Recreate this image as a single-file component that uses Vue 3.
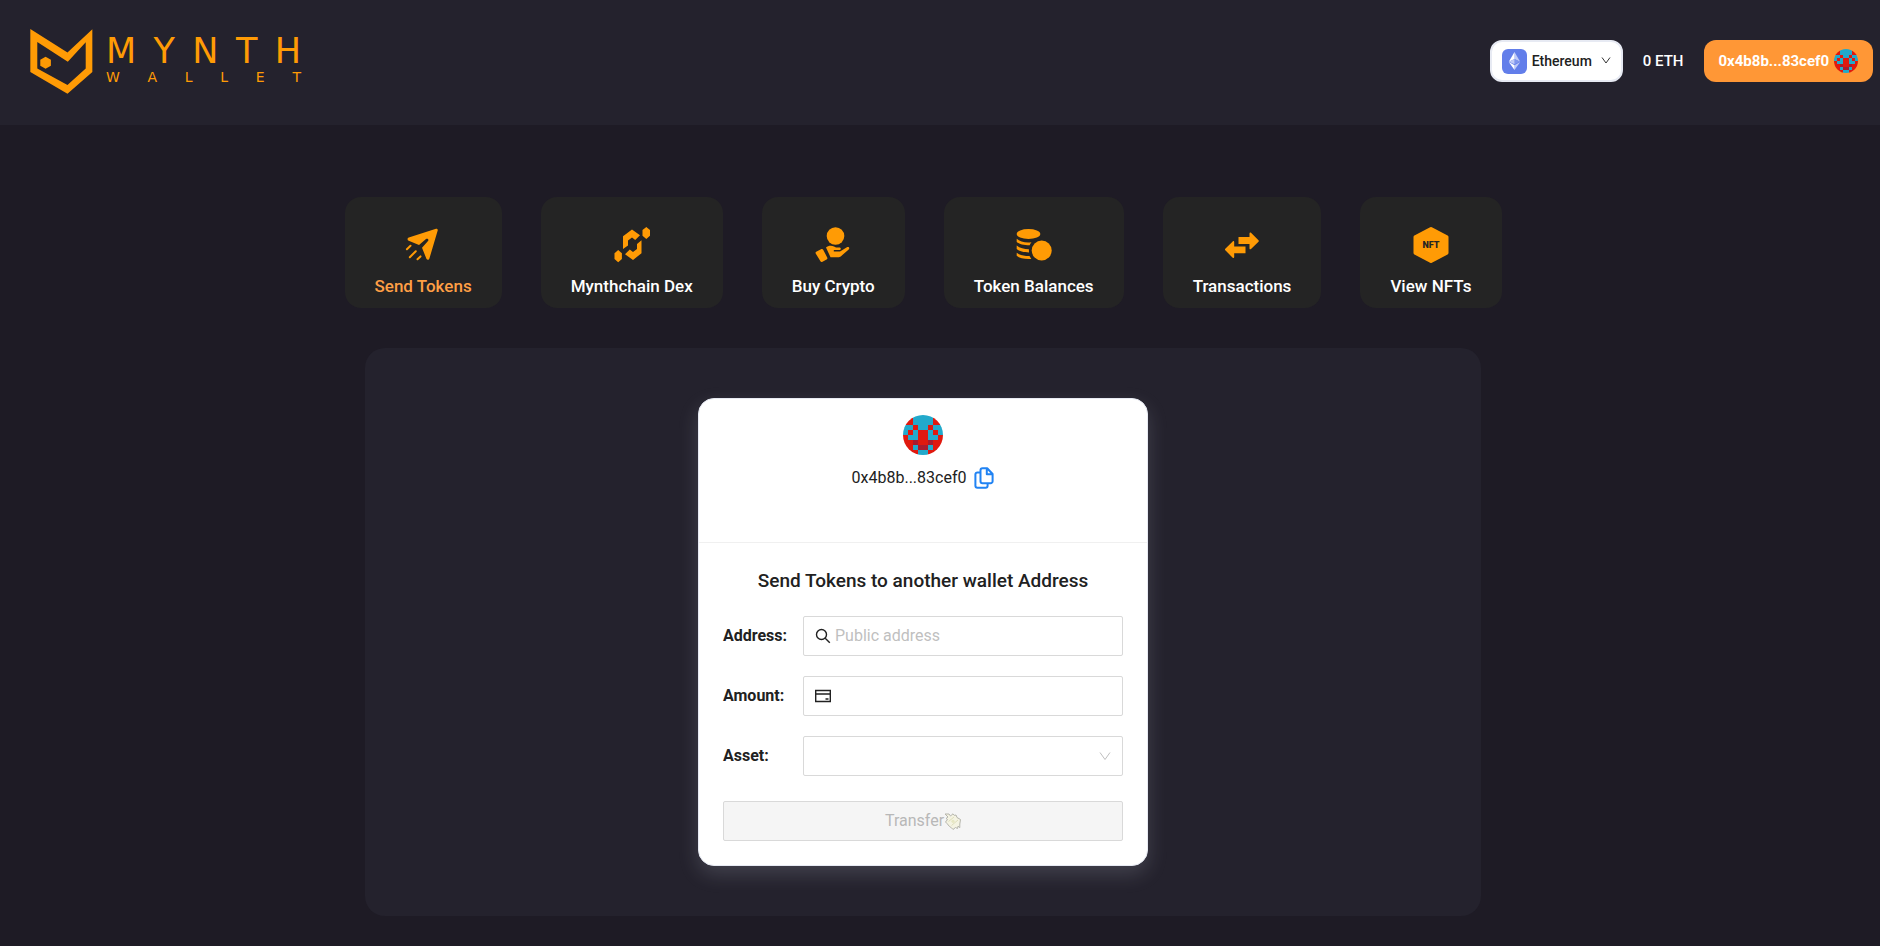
<script setup>
import { ref } from 'vue'

const address = '0x4b8b...83cef0'
const recipient = ref('')
const amount = ref('')
const asset = ref('')

const tabs = [
  { id: 'send', label: 'Send Tokens', active: true },
  { id: 'dex', label: 'Mynthchain Dex' },
  { id: 'buy', label: 'Buy Crypto' },
  { id: 'balances', label: 'Token Balances' },
  { id: 'transactions', label: 'Transactions' },
  { id: 'nfts', label: 'View NFTs' },
]

/* b = blue, r = red, d = dark red */
const blockie = [
  'rrbbbbrr',
  'rrbbbbrr',
  'bbrbbrbb',
  'brbrrbrb',
  'rbbrrbbr',
  'rrdrrdrr',
  'rrbddbrr',
  'rrrbbrrr',
]
const palette = { b: '#22a9cb', r: '#e0190f', d: '#a81c30' }
const cells = blockie.flatMap((row, y) =>
  [...row].map((c, x) => ({ x, y, fill: palette[c] })),
)
</script>

<template>
  <div class="page">
    <header class="topbar">
      <a class="logo" href="#" aria-label="Mynth Wallet">
        <svg class="logo-mark" viewBox="90 87 188 196" aria-hidden="true">
          <path
            fill-rule="evenodd"
            d="M90 87 202 158 277 88V217L202 282 90 217ZM111 126V206L202 256 257 206V127L203 186Z"
          />
          <path d="M136 171 152 180V198L136 207 120 198V180Z" />
        </svg>
        <span class="logo-words">
          <span class="logo-line big"><span v-for="(c, i) in 'MYNTH'" :key="i">{{ c }}</span></span>
          <span class="logo-line small"><span v-for="(c, i) in 'WALLET'" :key="i">{{ c }}</span></span>
        </span>
      </a>

      <div class="account-area">
        <button class="chain" type="button">
          <svg class="eth" viewBox="0 0 25 25" aria-hidden="true">
            <rect width="25" height="25" rx="6" fill="#627eea" />
            <path d="M12.500 3v7.100l5.700 2.600z" fill="#c0cbf7" />
            <path d="M12.500 3 6.800 12.700l5.700-2.600z" fill="#fff" />
            <path d="M12.500 16.200v4.800l5.700-7.900z" fill="#c0cbf7" />
            <path d="M12.500 21v-4.800l-5.700-3.100z" fill="#fff" />
            <path d="m12.500 15.200 5.700-2.500-5.700-2.600z" fill="#8197ee" />
            <path d="m6.800 12.700 5.700 2.500v-5.100z" fill="#c0cbf7" />
          </svg>
          <span>Ethereum</span>
          <svg class="chevron" viewBox="0 0 10 10" aria-hidden="true">
            <path d="M1 1.500 5 7 9 1.500" />
          </svg>
        </button>
        <span class="balance">0 ETH</span>
        <button class="account" type="button">
          <span>{{ address }}</span>
          <svg class="avatar small-avatar" viewBox="0 0 8 8" shape-rendering="crispEdges" aria-hidden="true">
            <rect v-for="(c, i) in cells" :key="i" :x="c.x" :y="c.y" width="1" height="1" :fill="c.fill" />
          </svg>
        </button>
      </div>
    </header>

    <main class="content">
      <nav class="tabs">
        <a v-for="t in tabs" :key="t.id" href="#" class="tab" :class="{ active: t.active }">
          <svg class="tab-icon" viewBox="0 0 36 36" aria-hidden="true">
            <g v-if="t.id === 'send'">
              <path
                d="M31 1.700c1.300-.3 2 .6 1.700 1.900L24.400 31.500c-.5 1.600-2.300 1.700-3 .2L17 20.700l6-6.700c1.300-1.500-.6-3.200-2-1.900l-7 5.900-10.300-4.200c-1.600-.7-1.500-2.700.1-3.200z"
              />
              <path class="line" d="m1.900 22.200 3.600-3.400M4.800 30.200l6-6M12.500 32.200l3-2.800" />
            </g>
            <g v-else-if="t.id === 'dex'">
              <path d="m18 2.500 8 5.800-4.800 4.700-3.200-2.500-4 3v5l-5 3.500V9.300z" />
              <path d="m19 33-8-5.800 4.800-4.700 3.200 2.500 4-3v-5l4.500-3.800v13z" />
              <path d="m32.300 0 3.700 3v5.800l-3.700 3.200-3.800-3.200V3z" />
              <path d="m4.200 23 3.700 3.200V32l-3.700 3.200L.500 32v-5.800z" />
            </g>
            <g v-else-if="t.id === 'buy'">
              <circle cx="20.500" cy="9" r="8.800" />
              <path
                d="M11 20.500c2-2 5.500-2.300 8-1l2 1h3.500c1.600 0 1.800 2.600 0 2.600h-5.700v1.400H25l6.500-4c1.800-1.400 3.800.3 2.200 2L26 29.200c-1 .8-1.800 1-3 1h-7.500z"
              />
              <path d="M1.200 24.800 6 22.200c1-.5 1.700-.3 2.200.6l4 7.600c.5 1 .2 1.500-.6 2L7.500 34.700c-1 .5-1.700.3-2.200-.6L.700 26.500c-.4-.8-.2-1.300.5-1.700z" />
            </g>
            <g v-else-if="t.id === 'balances'">
              <ellipse cx="12.500" cy="7" rx="11.800" ry="5" />
              <path d="M.700 11.800c3 3 8.800 4.200 14.800 3.500-.9 1-1.500 2-1.800 3C8 18.300 3 17 .700 15z" />
              <path d="M.700 18.500c3 2.600 7.500 3.600 12.200 3.700l.1 3.200C8 25.400 3 24.300.700 22z" />
              <path d="M.700 25.700c3 2.500 8 3.400 12.800 3.300l1.800 3C9 32.300 3.400 31.500.700 28.800z" />
              <circle cx="25.700" cy="23.500" r="10" />
            </g>
            <g v-else-if="t.id === 'transactions'">
              <path d="M14.500 10h11V6.400c0-1 .8-1.300 1.500-.6l7.500 7.400c.5.500.5 1 0 1.500L27 22c-.7.700-1.500.3-1.500-.6V17h-11z" />
              <path d="M21.500 26.200v-6.700H10.200V15c0-1-.8-1.300-1.500-.6L1.300 21.800c-.5.500-.5 1 0 1.500l7.400 7.400c.7.700 1.500.3 1.500-.6v-3.900z" />
            </g>
            <g v-else>
              <path d="M18.900.3 34.600 8.500q.9.500.9 1.400v16.200q0 .9-.9 1.400L18.900 35.700q-.9.400-1.800 0L1.400 27.500q-.9-.5-.9-1.400V9.900q0-.9.900-1.400L17.100.3q.9-.4 1.800 0z" />
              <text x="18" y="21">NFT</text>
            </g>
          </svg>
          <span>{{ t.label }}</span>
        </a>
      </nav>

      <section class="panel">
        <div class="card">
          <div class="card-head">
            <svg class="avatar" viewBox="0 0 8 8" shape-rendering="crispEdges" aria-hidden="true">
              <rect v-for="(c, i) in cells" :key="i" :x="c.x" :y="c.y" width="1" height="1" :fill="c.fill" />
            </svg>
            <div class="address">
              <span>{{ address }}</span>
              <button class="copy" type="button" aria-label="Copy address">
                <svg viewBox="0 0 20 22" aria-hidden="true">
                  <path d="M8.500 1.200h4.700L18.600 7v7.200a2 2 0 0 1-2 2H8.500a2 2 0 0 1-2-2v-11a2 2 0 0 1 2-2zM12.800 1.500V7.300h5.500" />
                  <path d="M6.500 5.400H3.400a2 2 0 0 0-2 2v11.400a2 2 0 0 0 2 2h8.200a2 2 0 0 0 2-2v-2.600" />
                </svg>
              </button>
            </div>
          </div>
          <form class="form" @submit.prevent>
            <h3>Send Tokens to another wallet Address</h3>
            <div class="row">
              <label for="recipient">Address:</label>
              <div class="field">
                <svg viewBox="0 0 16 16" aria-hidden="true">
                  <circle cx="6.500" cy="6.500" r="5" />
                  <path d="m10.200 10.200 4.600 4.600" />
                </svg>
                <input id="recipient" v-model="recipient" type="text" placeholder="Public address" />
              </div>
            </div>
            <div class="row">
              <label for="amount">Amount:</label>
              <div class="field">
                <svg viewBox="0 0 16 16" aria-hidden="true">
                  <path d="M.700 2.500h14.600v11H.700zM.700 6h14.600M10.500 11h3" />
                </svg>
                <input id="amount" v-model="amount" type="text" />
              </div>
            </div>
            <div class="row">
              <label for="asset">Asset:</label>
              <div class="field select-field">
                <select id="asset" v-model="asset"></select>
                <svg class="chevron pale" viewBox="0 0 12 12" aria-hidden="true">
                  <path d="M1 2.500 6 9.500 11 2.500" />
                </svg>
              </div>
            </div>
            <button class="transfer" type="submit" disabled>
              <span>Transfer</span>
              <svg viewBox="0 0 17 17" aria-hidden="true">
                <path
                  d="M1 1h4l1.500 2L9 .800l1.300 1.600 1.700-.4 1 2.500 3.500 2-.7 4.500v3.700l-1.800-1.500-.5 2.300-2-1L9 16.500 7.500 14.800 5.500 13.500 3 10.500 1.500 9 3.500 6.500 2 5.500 4 4z"
                  fill="#f4f3e2" stroke="#b5b5ac" stroke-linejoin="round"
                />
                <path d="M4.500 8.500 10 4M7.500 12.500 14 7" stroke="#dedeba" fill="none" />
                <circle cx="9" cy="8.300" r="1.600" fill="#e6e6c2" />
              </svg>
            </button>
          </form>
        </div>
      </section>
    </main>
  </div>
</template>

<style>
body {
  background: #1e1b25;
}
</style>

<style scoped>
.page,
.page * {
  box-sizing: border-box;
}
.page {
  min-height: 100vh;
  background: #1e1b25;
  color: #212121;
  font-family: Roboto, "Liberation Sans", sans-serif;
  font-size: 16px;
  font-weight: 500;
  line-height: 24px;
}
button,
input,
select {
  font: inherit;
}
a {
  text-decoration: none;
}
.topbar {
  display: flex;
  align-items: center;
  justify-content: space-between;
  height: 125px;
  padding: 0 7px 3px 30px;
  background: #24222d;
}
.logo {
  display: flex;
  align-items: center;
  gap: 13px;
  color: #ff9b05;
}
.logo-mark {
  width: 63px;
  height: 65px;
  fill: currentColor;
}
.logo-words {
  display: flex;
  flex-direction: column;
  gap: 6px;
  width: 195px;
  font-family: "DejaVu Sans", sans-serif;
  font-weight: 400;
}
.logo-line {
  display: flex;
  justify-content: space-between;
}
.big {
  font-size: 35px;
  line-height: 26px;
}
.small {
  font-size: 14px;
  line-height: 14px;
}
.account-area {
  display: flex;
  align-items: center;
  gap: 20px;
  font-size: 15px;
}
.chain,
.account {
  display: flex;
  align-items: center;
  height: 42px;
  border-radius: 12px;
}
.chain {
  gap: 5px;
  padding: 0 10px;
  border: 2px solid #e7eaf3;
  background: #fff;
  color: #212121;
  font-size: 14px;
}
.eth {
  width: 25px;
  height: 25px;
}
.chevron {
  width: 10px;
  height: 10px;
  margin-left: 4px;
  fill: none;
  stroke: #333;
}
.balance {
  color: #fff;
}
.account {
  gap: 5px;
  padding: 0 15px;
  border: 0;
  background: #ff9736;
  color: #fff;
  font-weight: 700;
}
.avatar {
  width: 40px;
  height: 40px;
  border-radius: 50%;
}
.small-avatar {
  width: 24px;
  height: 24px;
}
.content {
  display: flex;
  flex-direction: column;
  align-items: center;
  gap: 40px;
  padding: 72px 34px 30px 0;
}
.tabs {
  display: flex;
  gap: 39px;
}
.tab {
  display: flex;
  flex-direction: column;
  align-items: center;
  gap: 11px;
  padding: 30px 30px 10px;
  border-radius: 16px;
  background: #242424;
  color: #fff;
  font-size: 17px;
}
.tab.active {
  color: #ff9f45;
}
.tab-icon {
  width: 36px;
  height: 36px;
  fill: #ff9b05;
}
.tab-icon .line {
  stroke: #ff9b05;
  stroke-width: 2;
  stroke-linecap: round;
}
.tab-icon text {
  fill: #242424;
  font-size: 9px;
  font-weight: 900;
  text-anchor: middle;
}
.panel {
  display: flex;
  justify-content: center;
  width: 100%;
  max-width: 1116px;
  padding: 50px;
  border-radius: 20px;
  background: #24222d;
}
.card {
  width: 450px;
  border: 1px solid #e7eaf3;
  border-radius: 16px;
  background: #fff;
  box-shadow: 0 8px 20px rgba(189, 197, 209, 0.2);
}
.card-head {
  display: flex;
  flex-direction: column;
  align-items: center;
  gap: 11px;
  padding: 16px 24px 52px;
  border-bottom: 1px solid #f0f0f0;
}
.address {
  display: flex;
  align-items: center;
  gap: 8px;
  font-weight: 400;
}
.copy {
  display: flex;
  padding: 0;
  border: 0;
  background: none;
}
.copy svg {
  width: 20px;
  height: 22px;
  fill: none;
  stroke: #2183f3;
  stroke-width: 2;
  stroke-linejoin: round;
}
.form {
  display: flex;
  flex-direction: column;
  gap: 20px;
  padding: 24px;
}
h3 {
  margin: 0;
  padding-bottom: 1px;
  font-size: 19px;
  font-weight: 500;
  line-height: 28px;
  text-align: center;
}
.row {
  display: flex;
  align-items: center;
}
.row label {
  width: 80px;
  font-weight: 700;
}
.field {
  display: flex;
  flex: 1;
  align-items: center;
  gap: 4px;
  height: 40px;
  padding: 0 11px;
  border: 1px solid #d9d9d9;
  border-radius: 2px;
}
.field > svg:first-child {
  width: 16px;
  height: 16px;
  fill: none;
  stroke: #212121;
  stroke-width: 1.400;
}
.field input,
.field select {
  flex: 1;
  min-width: 0;
  padding: 0;
  border: 0;
  outline: 0;
  appearance: none;
  background: none;
  color: #212121;
  font-weight: 400;
}
.field input::placeholder {
  color: #bfbfbf;
}
.pale {
  width: 12px;
  height: 12px;
  stroke: #bfbfbf;
}
.transfer {
  display: flex;
  align-items: center;
  justify-content: center;
  height: 40px;
  margin-top: 5px;
  border: 1px solid #d9d9d9;
  border-radius: 2px;
  background: #f5f5f5;
  color: #b8b8b8;
  font-weight: 400;
}
.transfer svg {
  width: 17px;
  height: 17px;
}
</style>
